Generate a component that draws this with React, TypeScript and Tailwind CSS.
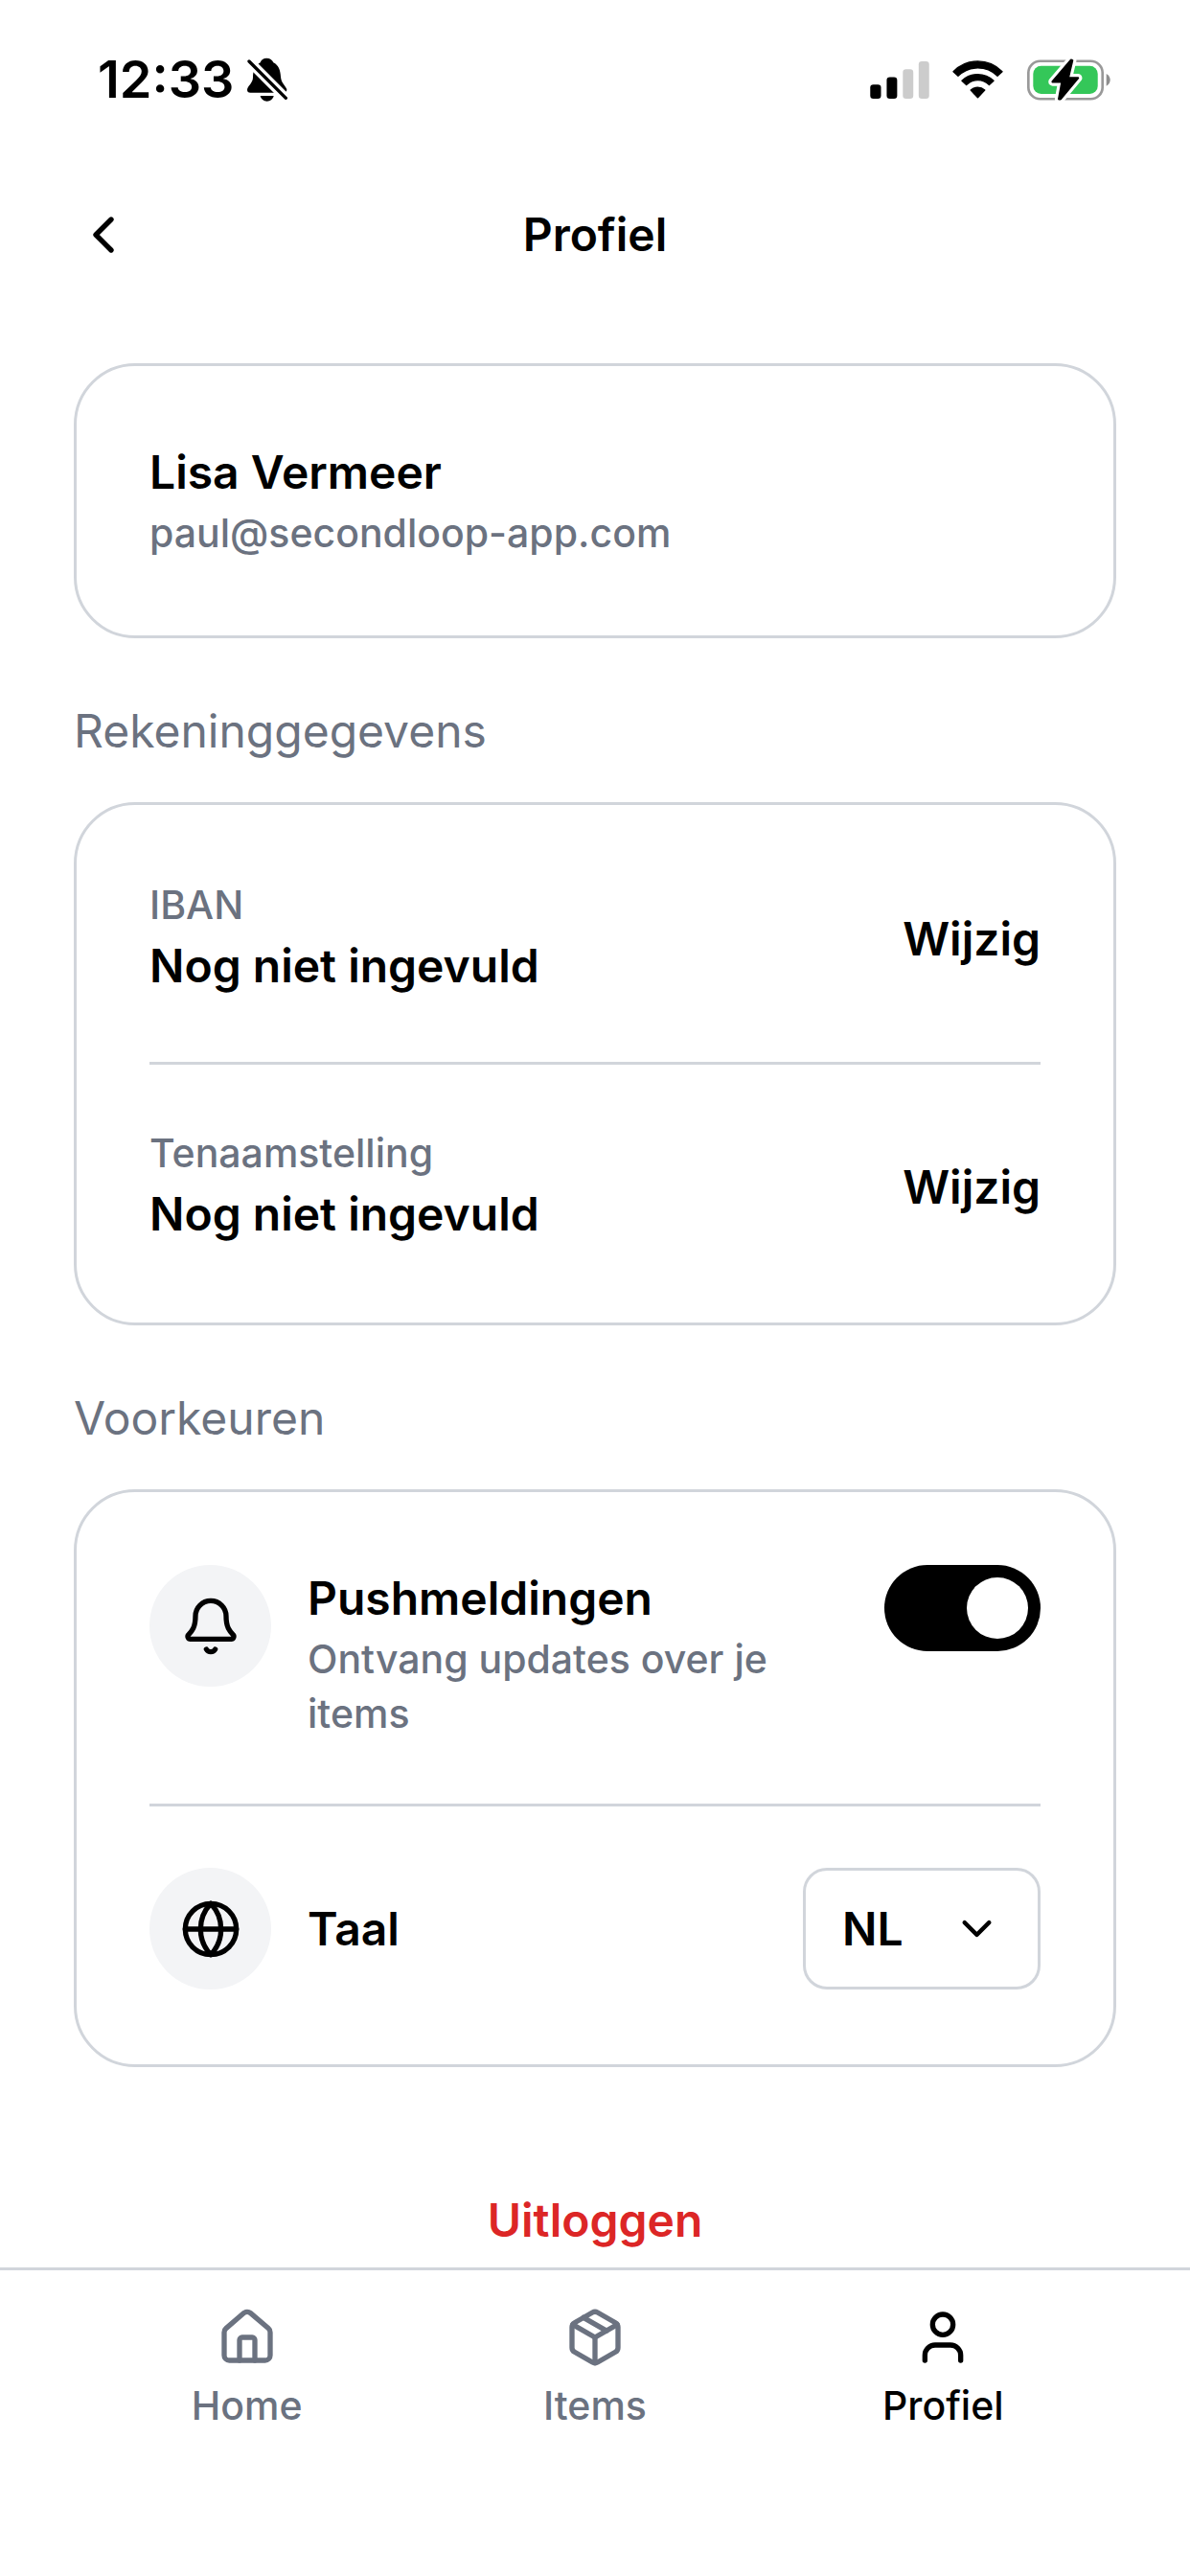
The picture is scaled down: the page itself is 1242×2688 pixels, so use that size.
import { useState } from 'react'
import type { ReactNode } from 'react'
import {
  Bell,
  ChevronDown,
  ChevronLeft,
  Globe,
  House,
  Package,
  User,
} from 'lucide-react'
import type { LucideIcon } from 'lucide-react'

function SilentIcon() {
  return (
    <svg className="w-[42px] h-[46px]" viewBox="536 60 126 138" aria-hidden="true">
      <path d="M597 62c-10 0-18 6-20 14-17 10-23 28-23 46 0 18-18 28-18 39q0 9 10 9h104q10 0 10-10c-3-11-18-20-19-40-1-20-7-36-23-44-3-8-11-14-21-14z" />
      <path d="M577 180h42c-2 10-11 17-21 17s-19-7-21-17z" />
      <path d="M530 60 662 192" stroke="#fff" strokeWidth="30" />
      <path d="M542 72 657 187" stroke="#000" strokeWidth="10" strokeLinecap="round" />
    </svg>
  )
}

function SignalIcon() {
  return (
    <svg className="w-[62px] h-[39px]" viewBox="55 68 186 118" aria-hidden="true">
      <rect x="55" y="141" width="34" height="45" rx="10" />
      <rect x="107" y="118" width="33" height="68" rx="10" />
      <rect x="158" y="93" width="33" height="93" rx="10" fill="#cccccc" />
      <rect x="208" y="68" width="33" height="118" rx="10" fill="#cccccc" />
    </svg>
  )
}

function WifiIcon() {
  return (
    <svg
      className="w-[53px] h-[40px]"
      viewBox="312 67 160 120"
      stroke="#000"
      strokeWidth="4"
      strokeLinejoin="round"
      aria-hidden="true"
    >
      <path d="M315 102A107 107 0 0 1 469 102L454 116A88 88 0 0 0 330 116Z" />
      <path d="M342 131A72 72 0 0 1 442 131L428 144A50 50 0 0 0 356 144Z" />
      <path d="M370 160A34 34 0 0 1 414 160L392 184Z" />
    </svg>
  )
}

function BatteryIcon() {
  const bolt = 'M681 65 623 133H653L643 187 648 187 703 121H672L685 66Z'
  return (
    <svg className="w-[89px] h-[44px]" viewBox="540 60 268 132" aria-hidden="true">
      <rect x="547" y="68" width="233" height="119" rx="37" fill="none" stroke="#999999" strokeWidth="8" />
      <path d="M792 108c8 4 12 11 12 19s-4 15-12 19z" fill="#8e8e8e" />
      <rect x="562" y="83" width="203" height="88" rx="25" fill="#34c759" />
      <path d={bolt} stroke="#fff" strokeWidth="26" strokeLinejoin="round" />
      <path d={bolt} stroke="#000" strokeWidth="7" strokeLinejoin="round" />
    </svg>
  )
}

function StatusBar() {
  return (
    <div className="flex h-[166px] items-center justify-between pl-[102px] pr-[82px]">
      <div className="flex items-center gap-[14px]">
        <span className="text-[54px] leading-none font-semibold">12:33</span>
        <SilentIcon />
      </div>
      <div className="flex items-center gap-6">
        <SignalIcon />
        <WifiIcon />
        <BatteryIcon />
      </div>
    </div>
  )
}

function Card({ children }: { children: ReactNode }) {
  return (
    <div className="rounded-[64px] border-[3px] border-[#d1d5db] px-[76px] pt-[76px] pb-[78px]">
      {children}
    </div>
  )
}

function SectionTitle({ children }: { children: ReactNode }) {
  return (
    <h2 className="mt-[62px] mb-[39px] text-[48px] leading-[70px] text-[#6b7280]">
      {children}
    </h2>
  )
}

function AccountRow({ label, value }: { label: string; value: string }) {
  return (
    <div className="flex items-center justify-between">
      <dl>
        <dt className="text-[41px] leading-[57px] font-medium text-[#6b7280]">{label}</dt>
        <dd className="text-[48px] leading-[70px] font-semibold">{value}</dd>
      </dl>
      <button type="button" aria-label={`Wijzig ${label}`} className="text-[48px] leading-[70px] font-semibold">
        Wijzig
      </button>
    </div>
  )
}

function Divider() {
  return <hr className="mt-[65px] mb-[64px] border-t-[3px] border-[#d1d5db]" />
}

function IconCircle({ icon: Icon }: { icon: LucideIcon }) {
  return (
    <div className="flex size-[127px] shrink-0 items-center justify-center rounded-full bg-[#f3f4f6]">
      <Icon className="size-16" />
    </div>
  )
}

function NavItem({ icon: Icon, label, active }: { icon: LucideIcon; label: string; active?: boolean }) {
  return (
    <a
      href="#"
      aria-current={active ? 'page' : undefined}
      className={`flex flex-1 flex-col items-center gap-[11px] ${active ? 'text-black' : 'text-[#6b7280]'}`}
    >
      <Icon className="size-16" />
      <span className="text-[41px] leading-[57px] font-medium">{label}</span>
    </a>
  )
}

export default function App() {
  const [push, setPush] = useState(true)
  const [language, setLanguage] = useState('NL')

  return (
    <div className="flex min-h-screen flex-col bg-white font-['Inter',sans-serif] text-black">
      <StatusBar />

      <header className="grid h-[158px] grid-cols-[1fr_auto_1fr] items-center px-[76px]">
        <button type="button" aria-label="Terug" className="justify-self-start">
          <ChevronLeft className="size-16" />
        </button>
        <h1 className="text-[48px] leading-[70px] font-semibold">Profiel</h1>
      </header>

      <main className="flex flex-1 flex-col px-[77px] pt-[55px] pb-[14px]">
        <Card>
          <p className="text-[48px] leading-[70px] font-semibold">Lisa Vermeer</p>
          <p className="text-[41px] leading-[57px] font-medium text-[#6b7280]">paul@secondloop-app.com</p>
        </Card>

        <SectionTitle>Rekeninggegevens</SectionTitle>
        <Card>
          <AccountRow label="IBAN" value="Nog niet ingevuld" />
          <Divider />
          <AccountRow label="Tenaamstelling" value="Nog niet ingevuld" />
        </Card>

        <SectionTitle>Voorkeuren</SectionTitle>
        <Card>
          <div className="flex items-start gap-[38px]">
            <IconCircle icon={Bell} />
            <div className="flex-1">
              <label htmlFor="push" className="block text-[48px] leading-[70px] font-semibold">
                Pushmeldingen
              </label>
              <p className="text-[41px] leading-[57px] font-medium text-[#6b7280]">
                Ontvang updates over je items
              </p>
            </div>
            <input
              id="push"
              type="checkbox"
              role="switch"
              checked={push}
              onChange={(e) => setPush(e.target.checked)}
              className="flex h-[90px] w-[163px] shrink-0 appearance-none rounded-full bg-[#d1d5db] p-[13px] before:size-16 before:rounded-full before:bg-white before:content-[''] checked:justify-end checked:bg-black"
            />
          </div>
          <Divider />
          <div className="flex items-center gap-[38px]">
            <IconCircle icon={Globe} />
            <label htmlFor="language" className="flex-1 text-[48px] leading-[70px] font-semibold">
              Taal
            </label>
            <div className="relative">
              <select
                id="language"
                value={language}
                onChange={(e) => setLanguage(e.target.value)}
                className="h-[127px] w-[248px] appearance-none rounded-[25px] border-[3px] border-[#d1d5db] bg-white px-[38px] text-[48px] font-semibold"
              >
                <option value="NL">NL</option>
                <option value="EN">EN</option>
              </select>
              <ChevronDown className="pointer-events-none absolute inset-y-0 right-[41px] my-auto size-[51px]" />
            </div>
          </div>
        </Card>

        <button
          type="button"
          className="mt-[125px] self-center text-[48px] leading-[70px] font-semibold text-[#dc2626]"
        >
          Uitloggen
        </button>
      </main>

      <nav className="flex border-t-[3px] border-[#d1d5db] px-[76px] pt-[38px] pb-[149px]">
        <NavItem icon={House} label="Home" />
        <NavItem icon={Package} label="Items" />
        <NavItem icon={User} label="Profiel" active />
      </nav>
    </div>
  )
}
